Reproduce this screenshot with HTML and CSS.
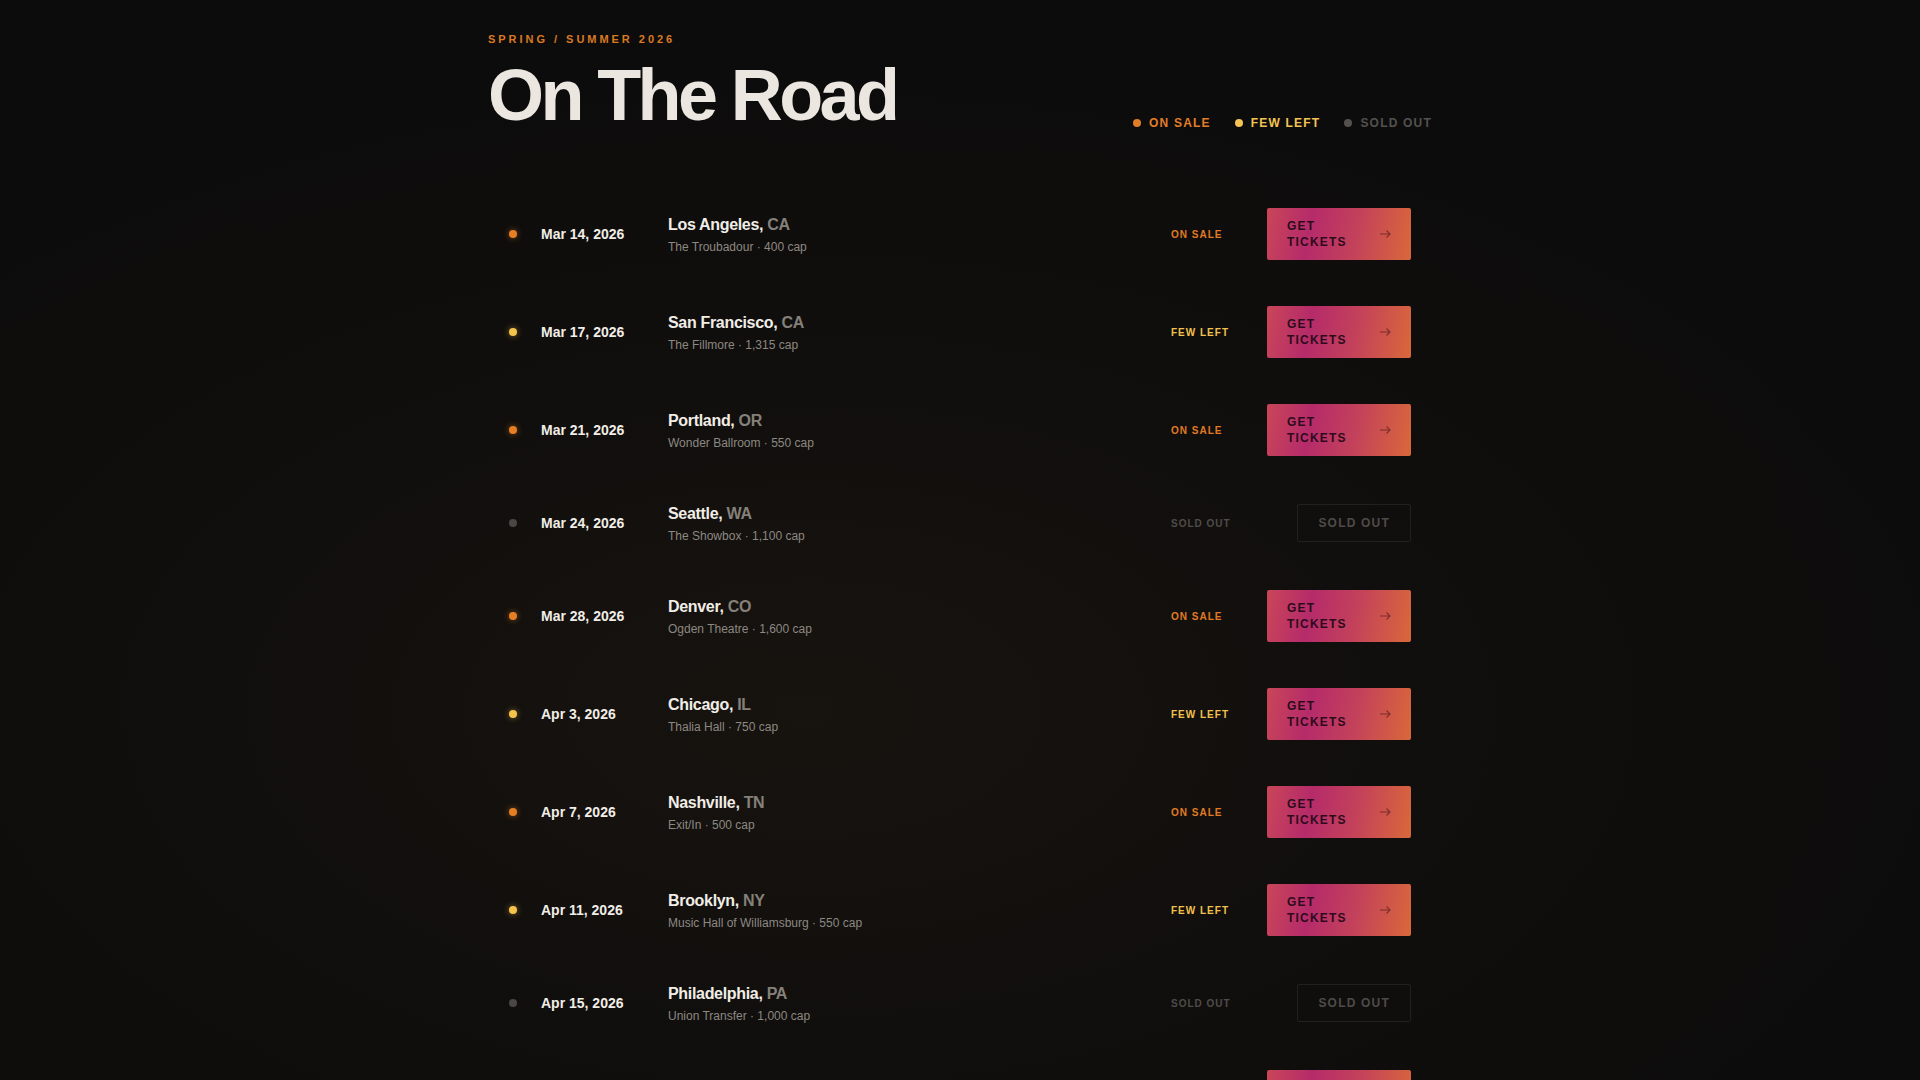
FILE: index.html
```html
<!DOCTYPE html>
<html lang="en">
<head>
<meta charset="utf-8" />
<title>On The Road</title>
<link rel="stylesheet" href="styles.css">
</head>

<body>
<div id="tour">
	<div class="head">
		<div class="title">
			<p class="eyebrow">Spring / Summer 2026</p>
			<h1>On The Road</h1>
		</div>
		<ul class="legend">
			<li class="on"><i></i>On Sale</li>
			<li class="few"><i></i>Few Left</li>
			<li class="out"><i></i>Sold Out</li>
		</ul>
	</div>

	<ul class="dates">
		<li class="on">
			<i class="dot"></i>
			<span class="date">Mar 14, 2026</span>
			<div class="place"><b>Los Angeles, <em>CA</em></b><span>The Troubadour · 400 cap</span></div>
			<span class="status">On Sale</span>
			<a class="buy" href="javascript:;"><span>Get Tickets</span><svg width="11" height="8" viewBox="0 0 11 8"><path d="M0 4h10M6.5 .5L10 4 6.5 7.5" fill="none" stroke="currentColor" stroke-width="1.1"/></svg></a>
		</li>
		<li class="few">
			<i class="dot"></i>
			<span class="date">Mar 17, 2026</span>
			<div class="place"><b>San Francisco, <em>CA</em></b><span>The Fillmore · 1,315 cap</span></div>
			<span class="status">Few Left</span>
			<a class="buy" href="javascript:;"><span>Get Tickets</span><svg width="11" height="8" viewBox="0 0 11 8"><path d="M0 4h10M6.5 .5L10 4 6.5 7.5" fill="none" stroke="currentColor" stroke-width="1.1"/></svg></a>
		</li>
		<li class="on">
			<i class="dot"></i>
			<span class="date">Mar 21, 2026</span>
			<div class="place"><b>Portland, <em>OR</em></b><span>Wonder Ballroom · 550 cap</span></div>
			<span class="status">On Sale</span>
			<a class="buy" href="javascript:;"><span>Get Tickets</span><svg width="11" height="8" viewBox="0 0 11 8"><path d="M0 4h10M6.5 .5L10 4 6.5 7.5" fill="none" stroke="currentColor" stroke-width="1.1"/></svg></a>
		</li>
		<li class="out">
			<i class="dot"></i>
			<span class="date">Mar 24, 2026</span>
			<div class="place"><b>Seattle, <em>WA</em></b><span>The Showbox · 1,100 cap</span></div>
			<span class="status">Sold Out</span>
			<span class="gone">Sold Out</span>
		</li>
		<li class="on">
			<i class="dot"></i>
			<span class="date">Mar 28, 2026</span>
			<div class="place"><b>Denver, <em>CO</em></b><span>Ogden Theatre · 1,600 cap</span></div>
			<span class="status">On Sale</span>
			<a class="buy" href="javascript:;"><span>Get Tickets</span><svg width="11" height="8" viewBox="0 0 11 8"><path d="M0 4h10M6.5 .5L10 4 6.5 7.5" fill="none" stroke="currentColor" stroke-width="1.1"/></svg></a>
		</li>
		<li class="few">
			<i class="dot"></i>
			<span class="date">Apr 3, 2026</span>
			<div class="place"><b>Chicago, <em>IL</em></b><span>Thalia Hall · 750 cap</span></div>
			<span class="status">Few Left</span>
			<a class="buy" href="javascript:;"><span>Get Tickets</span><svg width="11" height="8" viewBox="0 0 11 8"><path d="M0 4h10M6.5 .5L10 4 6.5 7.5" fill="none" stroke="currentColor" stroke-width="1.1"/></svg></a>
		</li>
		<li class="on">
			<i class="dot"></i>
			<span class="date">Apr 7, 2026</span>
			<div class="place"><b>Nashville, <em>TN</em></b><span>Exit/In · 500 cap</span></div>
			<span class="status">On Sale</span>
			<a class="buy" href="javascript:;"><span>Get Tickets</span><svg width="11" height="8" viewBox="0 0 11 8"><path d="M0 4h10M6.5 .5L10 4 6.5 7.5" fill="none" stroke="currentColor" stroke-width="1.1"/></svg></a>
		</li>
		<li class="few">
			<i class="dot"></i>
			<span class="date">Apr 11, 2026</span>
			<div class="place"><b>Brooklyn, <em>NY</em></b><span>Music Hall of Williamsburg · 550 cap</span></div>
			<span class="status">Few Left</span>
			<a class="buy" href="javascript:;"><span>Get Tickets</span><svg width="11" height="8" viewBox="0 0 11 8"><path d="M0 4h10M6.5 .5L10 4 6.5 7.5" fill="none" stroke="currentColor" stroke-width="1.1"/></svg></a>
		</li>
		<li class="out">
			<i class="dot"></i>
			<span class="date">Apr 15, 2026</span>
			<div class="place"><b>Philadelphia, <em>PA</em></b><span>Union Transfer · 1,000 cap</span></div>
			<span class="status">Sold Out</span>
			<span class="gone">Sold Out</span>
		</li>
		<li class="on">
			<i class="dot"></i>
			<span class="date">Apr 18, 2026</span>
			<div class="place"><b>Boston, <em>MA</em></b><span>Paradise Rock Club · 933 cap</span></div>
			<span class="status">On Sale</span>
			<a class="buy" href="javascript:;"><span>Get Tickets</span><svg width="11" height="8" viewBox="0 0 11 8"><path d="M0 4h10M6.5 .5L10 4 6.5 7.5" fill="none" stroke="currentColor" stroke-width="1.1"/></svg></a>
		</li>
	</ul>
</div>
</body>
</html>
```

FILE: styles.css
```css
*{margin:0; padding:0;}
html{background:#0d0c0c;}
body{min-height:100vh; font-family:"Liberation Sans", Arial, sans-serif; color:#ece8e1; background:radial-gradient(ellipse 60% 55% at 42% 62%, #17130f 0%, #110f0d 50%, #0d0c0c 100%);}
ul{list-style:none;}

#tour{width:944px; margin:0 auto; padding-top:33px;}

/* header */
#tour .head{display:flex; justify-content:space-between; align-items:flex-end;}
#tour .eyebrow{font-size:11px; line-height:13px; font-weight:bold; letter-spacing:.27em; text-transform:uppercase; color:#d97a22; margin-bottom:13px;}
#tour h1{font-size:72px; line-height:72px; font-weight:bold; letter-spacing:-.05em; color:#ebe7e0;}
#tour .legend{display:flex; gap:24px; font-size:12px; line-height:16px; font-weight:bold; letter-spacing:.1em; text-transform:uppercase;}
#tour .legend li{display:flex; align-items:center; gap:8px;}
#tour .legend i{width:8px; height:8px; border-radius:50%; background:currentColor;}
#tour .legend .on{color:#e27d27;}
#tour .legend .few{color:#f3c455;}
#tour .legend .out{color:#54514e;}

/* list */
#tour .dates{margin-top:54px;}
#tour .dates li{display:grid; grid-template-columns:8px 103px 1fr 72px 144px; column-gap:24px; align-items:center; padding:23px 21px;}
#tour .dot{width:8px; height:8px; border-radius:50%; background:#4a4745;}
#tour .on .dot{background:#e67e24; box-shadow:0 0 6px rgba(230,126,36,.55);}
#tour .few .dot{background:#f5c24c; box-shadow:0 0 6px rgba(245,194,76,.5);}
#tour .date{font-size:14px; font-weight:bold; color:#f1ede7; white-space:nowrap;}
#tour .place b{display:block; font-size:16px; line-height:24px; letter-spacing:-.02em; color:#f1ede7;}
#tour .place em{font-style:normal; color:#85807a;}
#tour .place span{display:block; margin-top:2px; font-size:12px; line-height:16px; color:#8d8882;}
#tour .status{font-size:10px; font-weight:bold; letter-spacing:.1em; text-transform:uppercase; color:#4f4c49;}
#tour .on .status{color:#e07a24;}
#tour .few .status{color:#f2c14e;}

#tour .buy{display:flex; align-items:center; justify-content:space-between; gap:12px; width:144px; box-sizing:border-box; padding:10px 20px; border-radius:2px; background:linear-gradient(100deg, #c94658 0%, #b52b6a 30%, #c4425a 62%, #d9683a 100%); color:#2e0b1c; font-size:12px; line-height:16px; font-weight:bold; letter-spacing:.1em; text-transform:uppercase; text-decoration:none;}
#tour .buy svg{flex:none; color:rgba(60,12,24,.55);}
#tour .gone{justify-self:end; padding:10px 20px; border:1px solid #22201e; border-radius:2px; font-size:12px; line-height:16px; font-weight:bold; letter-spacing:.1em; text-transform:uppercase; color:#4e4b48;}
```
